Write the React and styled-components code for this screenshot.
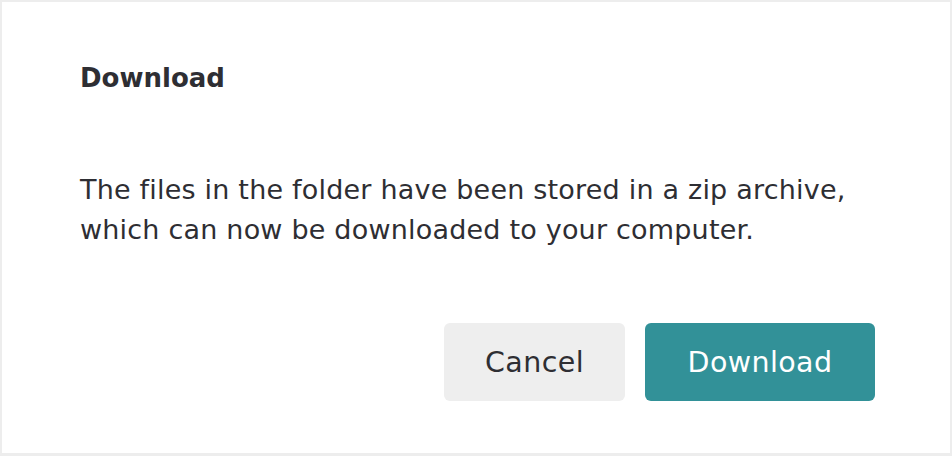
import styled, { createGlobalStyle } from "styled-components";

const GlobalStyle = createGlobalStyle`
  html, body {
    margin: 0;
    padding: 0;
    background: #ededed;
  }
  body {
    font-family: "DejaVu Sans", "Liberation Sans", sans-serif;
    color: #2e2e33;
  }
`;

const Card = styled.div`
  box-sizing: border-box;
  width: 948px;
  height: 451px;
  margin: 2px 2px 3px 2px;
  background: #ffffff;
  padding: 56px 75px 52px 78px;
  display: flex;
  flex-direction: column;
`;

const Title = styled.h2`
  margin: 0;
  font-size: 26px;
  font-weight: 700;
  line-height: 40px;
  color: #2e2e33;
`;

const Body = styled.p`
  margin: 72px 0 0;
  font-size: 27px;
  line-height: 40px;
  font-weight: 400;
  letter-spacing: 0.2px;
`;

const Actions = styled.div`
  margin-top: auto;
  display: flex;
  justify-content: flex-end;
  gap: 20px;
`;

const Button = styled.button`
  height: 78px;
  width: ${({ $width }) => $width}px;
  border: none;
  border-radius: 6px;
  font-family: inherit;
  font-size: 28.5px;
  font-weight: 400;
  letter-spacing: 0.4px;
  cursor: pointer;
  background: ${({ $primary }) => ($primary ? "#329198" : "#eeeeee")};
  color: ${({ $primary }) => ($primary ? "#ffffff" : "#2e2e33")};
`;

export default function App() {
  return (
    <>
      <GlobalStyle />
      <Card>
        <Title>Download</Title>
        <Body>
          The files in the folder have been stored in a zip archive,
          <br />
          which can now be downloaded to your computer.
        </Body>
        <Actions>
          <Button $width={181}>Cancel</Button>
          <Button $width={230} $primary>
            Download
          </Button>
        </Actions>
      </Card>
    </>
  );
}
